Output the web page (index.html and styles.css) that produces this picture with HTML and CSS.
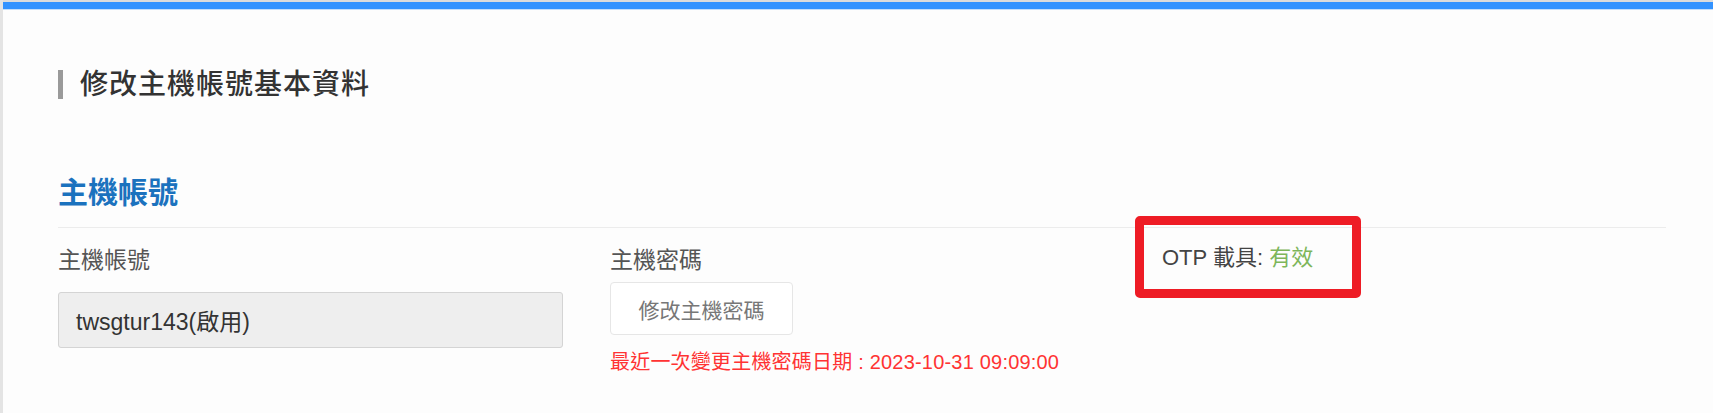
FILE: index.html
```html
<!DOCTYPE html>
<html lang="zh-Hant">
<head>
  <meta charset="UTF-8">
  <meta name="viewport" content="width=device-width, initial-scale=1.0">
  <title>修改主機帳號基本資料</title>
  <link rel="stylesheet" href="styles.css">
</head>
<body>

  <div class="top-bar"></div>

  <div class="page">
    <h1 class="page-title">修改主機帳號基本資料</h1>

    <div class="section">
      <h2 class="section-title">主機帳號</h2>

      <div class="form-row">
        <div class="form-col">
          <label class="field-label">主機帳號</label>
          <div class="field-value">twsgtur143(啟用)</div>
        </div>

        <div class="form-col">
          <label class="field-label">主機密碼</label>
          <button class="btn-plain" type="button">修改主機密碼</button>
          <p class="pwd-note">最近一次變更主機密碼日期 : 2023-10-31 09:09:00</p>
        </div>

        <div class="form-col">
          <div class="otp-status">
            OTP 載具: <span class="ok">有效</span>
            <span class="mark-box"></span>
          </div>
        </div>
      </div>
    </div>
  </div>

</body>
</html>
```

FILE: styles.css
```css
/* page base */
body {
  margin: 0;
  font-family: "Liberation Sans", "Noto Sans CJK TC", sans-serif;
  background-color: #fdfdfd;
  border-left: 3px solid #e4e4e4;
  min-height: 100vh;
  box-sizing: border-box;
}

.top-bar {
  height: 7px;
  background-color: #3393ff;
  border-top: 2px solid #dcdcdc;
  border-bottom: 1px solid #c4defa;
}

.page {
  padding: 0 47px 0 55px;
}

.page-title {
  display: flex;
  align-items: center;
  gap: 17px;
  margin: 60px 0 0;
  font-size: 28px;
  line-height: 29px;
  letter-spacing: 1px;
  font-weight: 500;
  color: #333;
}

.page-title::before {
  content: "";
  width: 5px;
  height: 29px;
  background-color: #9a9a9a;
}

.section-title {
  margin: 76px 0 0;
  padding-bottom: 16px;
  border-bottom: 1px solid #ececec;
  font-size: 30px;
  line-height: 36px;
  font-weight: 700;
  color: #1b72be;
}

.form-row {
  display: grid;
  grid-template-columns: 552px 552px 1fr;
  padding-top: 17px;
}

.form-col {
  display: flex;
  flex-direction: column;
  align-items: flex-start;
}

.field-label {
  font-size: 23px;
  line-height: 30px;
  color: #555;
}

.field-value {
  box-sizing: border-box;
  width: 505px;
  height: 56px;
  margin-top: 17px;
  padding: 0 17px;
  display: flex;
  align-items: center;
  background-color: #eee;
  border: 1px solid #d4d4d4;
  border-radius: 3px;
  font-size: 23px;
  color: #333;
}

.btn-plain {
  box-sizing: border-box;
  width: 183px;
  height: 53px;
  margin-top: 7px;
  padding: 0;
  background-color: #fff;
  border: 1px solid #e6e6e6;
  border-radius: 4px;
  font-family: inherit;
  font-size: 21px;
  color: #777;
}

.pwd-note {
  margin: 15px 0 0;
  font-size: 20px;
  line-height: 24px;
  letter-spacing: 0.2px;
  color: #ff3333;
}

.otp-status {
  position: relative;
  margin-top: -2px;
  font-size: 22px;
  line-height: 30px;
  color: #444;
}

.otp-status .ok {
  color: #7db65a;
}

/* red highlight drawn over the OTP line */
.mark-box {
  position: absolute;
  left: -27px;
  top: -27px;
  width: 226px;
  height: 82px;
  box-sizing: border-box;
  border: 9px solid #ee1c25;
  border-radius: 5px;
}
```
